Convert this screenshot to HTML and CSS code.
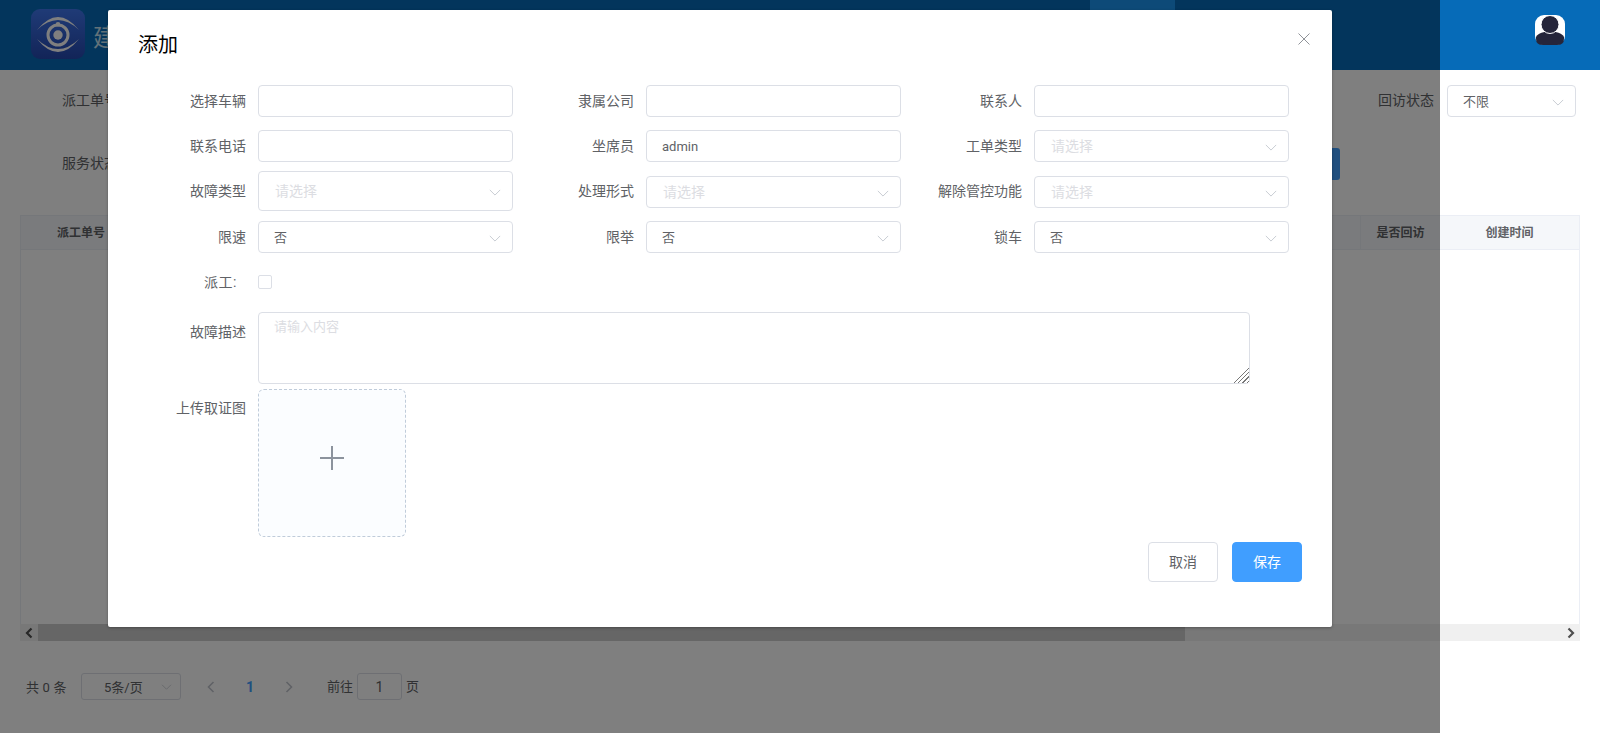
FILE: index.html
```html
<!DOCTYPE html>
<html lang="zh">
<head>
<meta charset="utf-8">
<title>添加</title>
<link rel="stylesheet" href="styles.css">
</head>
<body>
<div class="page">
  <header class="topbar">
    <svg class="logo" viewBox="0 0 54 50">
      <defs><linearGradient id="lg" x1="0" y1="0" x2="0" y2="1"><stop offset="0" stop-color="#3f76ee"/><stop offset="1" stop-color="#2549b0"/></linearGradient></defs>
      <rect width="54" height="50" rx="9" fill="url(#lg)"/>
      <path class="eye-fill" d="M6 21Q27 -5 48 21Q27 1 6 21Z"/>
      <path class="eye-fill" d="M6 30Q27 56 48 30Q27 50 6 30Z"/>
      <circle class="eye-line" cx="27" cy="26" r="10"/>
      <circle class="eye-fill" cx="27" cy="26" r="4.700"/>
      <circle class="eye-fill" cx="27" cy="15.300" r="2.300"/>
    </svg>
    <div class="brand">建</div>
    <div class="nav-tab"></div>
    <div class="user">
      <svg class="avatar" viewBox="0 0 30 30">
        <rect width="30" height="30" rx="9" fill="#fff"/>
        <path d="M1 22C3 18 9 16.500 15 16.500S27 18 29 22V24Q29 30 22 30H8Q1 30 1 24Z" fill="#25253a"/>
        <circle cx="15" cy="9.500" r="9" fill="#25253a" stroke="#fff" stroke-width="1"/>
      </svg>
    </div>
  </header>

  <section class="filters">
    <div class="filter-row">
      <span class="filter-label">派工单号</span>
      <div class="filter-end">
        <span class="filter-label">回访状态</span>
        <div class="field filter-select"><span>不限</span>
          <svg class="chev" viewBox="0 0 14 8"><path d="M1 1l6 6 6-6"/></svg></div>
      </div>
    </div>
    <div class="filter-row second">
      <span class="filter-label raised">服务状态</span>
      <div class="search-btn"></div>
    </div>
  </section>

  <section class="table">
    <div class="thead">
      <div class="th first">派工单号</div>
      <div class="th grow"></div>
      <div class="th mid-col">是否回访</div>
      <div class="th last">创建时间</div>
    </div>
    <div class="tbody"></div>
    <div class="hscroll">
      <div class="sb-btn"><svg viewBox="0 0 8 12"><path d="M6.500 1.500L2 6l4.500 4.500"/></svg></div>
      <div class="sb-track"><div class="sb-thumb"></div></div>
      <div class="sb-btn"><svg viewBox="0 0 8 12"><path d="M1.500 1.500L6 6l-4.500 4.500"/></svg></div>
    </div>
  </section>

  <footer class="pager">
    <span class="total">共 0 条</span>
    <div class="size-select"><span>5条/页</span><svg class="chev" viewBox="0 0 14 8"><path d="M1 1l6 6 6-6"/></svg></div>
    <svg class="pg-arrow first-arrow" viewBox="0 0 8 12"><path d="M6.500 1L1.500 6l5 5"/></svg>
    <span class="pg-num">1</span>
    <svg class="pg-arrow" viewBox="0 0 8 12"><path d="M1.500 1l5 5-5 5"/></svg>
    <span class="goto">前往</span>
    <div class="goto-input">1</div>
    <span class="goto-tail">页</span>
  </footer>
</div>

<div class="overlay">
  <div class="dialog">
    <svg class="close" viewBox="0 0 12 12"><path d="M.5.500l11 11M11.500.500l-11 11"/></svg>
    <h2 class="dialog-title">添加</h2>
    <form class="form-grid">
      <div class="item"><label class="lbl">选择车辆</label><input class="field" type="text"></div>
      <div class="item"><label class="lbl">隶属公司</label><input class="field" type="text"></div>
      <div class="item"><label class="lbl">联系人</label><input class="field" type="text"></div>

      <div class="item"><label class="lbl">联系电话</label><input class="field" type="text"></div>
      <div class="item"><label class="lbl">坐席员</label><input class="field" type="text" value="admin"></div>
      <div class="item"><label class="lbl">工单类型</label><div class="field"><span class="ph">请选择</span><svg class="chev" viewBox="0 0 14 8"><path d="M1 1l6 6 6-6"/></svg></div></div>

      <div class="item"><label class="lbl">故障类型</label><div class="field tall"><span class="ph">请选择</span><svg class="chev" viewBox="0 0 14 8"><path d="M1 1l6 6 6-6"/></svg></div></div>
      <div class="item centered"><label class="lbl">处理形式</label><div class="field"><span class="ph">请选择</span><svg class="chev" viewBox="0 0 14 8"><path d="M1 1l6 6 6-6"/></svg></div></div>
      <div class="item centered"><label class="lbl">解除管控功能</label><div class="field"><span class="ph">请选择</span><svg class="chev" viewBox="0 0 14 8"><path d="M1 1l6 6 6-6"/></svg></div></div>

      <div class="item"><label class="lbl">限速</label><div class="field"><span>否</span><svg class="chev" viewBox="0 0 14 8"><path d="M1 1l6 6 6-6"/></svg></div></div>
      <div class="item"><label class="lbl">限举</label><div class="field"><span>否</span><svg class="chev" viewBox="0 0 14 8"><path d="M1 1l6 6 6-6"/></svg></div></div>
      <div class="item"><label class="lbl">锁车</label><div class="field"><span>否</span><svg class="chev" viewBox="0 0 14 8"><path d="M1 1l6 6 6-6"/></svg></div></div>
    </form>

    <div class="dispatch-row"><label class="lbl dispatch-lbl">派工:</label><span class="check"></span></div>
    <div class="text-row"><label class="lbl top">故障描述</label><textarea class="area" placeholder="请输入内容"></textarea></div>
    <div class="upload-row">
      <label class="lbl top upload-lbl">上传取证图</label>
      <div class="upload"><svg viewBox="0 0 24 24"><path d="M12 0V24M0 12H24"/></svg></div>
    </div>
    <div class="dialog-foot">
      <button class="btn" type="button">取消</button>
      <button class="btn primary" type="button">保存</button>
    </div>
  </div>
</div>
</body>
</html>
```

FILE: styles.css
```css
* { box-sizing: border-box; }
html, body { margin: 0; padding: 0; height: 100%; overflow: hidden; background: #fff; }
body { font-family: Roboto, "Noto Sans CJK SC", sans-serif; font-size: 13px; color: #606266; }

.page { width: 1600px; height: 742px; display: flex; flex-direction: column; }

/* top bar */
.topbar { height: 70px; flex: none; display: flex; align-items: center; background: #066bb8; padding-left: 31px; }
.logo { width: 54px; height: 50px; flex: none; margin-top: -2px; }
.eye-fill { fill: #fff; }
.eye-line { fill: none; stroke: #fff; stroke-width: 3; }
.brand { margin-left: 8px; font-size: 24px; color: #c4e2f2; white-space: nowrap; width: 980px; overflow: hidden; }
.nav-tab { width: 85px; height: 70px; margin-left: 17px; background: #1a94f0; }
.user { margin-left: auto; width: 65px; display: flex; align-items: center; height: 70px; }
.avatar { width: 30px; height: 30px; margin-top: -10px; }

/* filters */
.filters { flex: none; }
.filter-row { display: flex; align-items: center; justify-content: space-between; height: 32px; margin-top: 15px; padding: 0 24px 0 62px; }
.filter-row.second { margin-top: 31px; padding-right: 260px; }
.filter-label { font-size: 14px; color: #606266; margin-bottom: 4px; }
.filter-label.raised { margin-bottom: 4px; }
.filter-end { display: flex; align-items: center; gap: 13px; }
.search-btn { width: 70px; height: 32px; background: #409eff; border-radius: 3px; }

/* table */
.table { margin: 35px 20px 0; height: 426px; flex: none; display: flex; flex-direction: column; }
.thead { height: 35px; flex: none; display: flex; background: #f5f7fa; border: 1px solid #ebeef5; }
.th { height: 33px; line-height: 35px; text-align: center; font-size: 12px; font-weight: 700; color: #606266; }
.th.first { width: 120px; }
.th.grow { flex: 1; }
.th.mid-col { width: 80px; border-left: 1px solid #ebeef5; }
.th.last { width: 139px; }
.tbody { flex: 1; border: solid #ebeef5; border-width: 0 1px; }
.hscroll { height: 17px; flex: none; display: flex; background: #f0f0f0; }
.sb-btn { width: 18px; flex: none; display: flex; align-items: center; justify-content: center; }
.sb-btn svg { width: 8px; height: 12px; fill: none; stroke: #505050; stroke-width: 2.200; }
.sb-track { flex: 1; }
.sb-thumb { width: 1147px; height: 17px; background: #cdcdcd; }

/* pagination */
.pager { flex: none; display: flex; align-items: center; height: 27px; margin-top: 32px; padding-left: 26px; }
.total { width: 55px; letter-spacing: .2px; }
.size-select { position: relative; width: 100px; height: 27px; border: 1px solid #dcdfe6; border-radius: 3px; display: flex; align-items: center; padding-left: 22px; }
.size-select .chev { width: 11px; height: 6px; right: 8px; margin-top: -3px; }
.pg-arrow { width: 8px; height: 12px; fill: none; stroke: #c0c4cc; stroke-width: 1.600; flex: none; }
.first-arrow { margin-left: 26px; }
.pg-num { width: 70px; text-align: center; font-size: 14px; font-weight: 700; color: #409eff; }
.goto { margin-left: 34px; margin-bottom: 2px; }
.goto-input { width: 45px; height: 27px; margin-left: 4px; border: 1px solid #dcdfe6; border-radius: 3px; text-align: center; font-size: 14px; line-height: 27px; }
.goto-tail { margin-left: 4px; margin-bottom: 2px; }

/* overlay + dialog */
.overlay { position: absolute; left: 0; top: 0; width: 1440px; height: 733px; background: rgba(0, 0, 0, .5); }
.dialog { position: relative; width: 1224px; height: 617px; margin: 10px 0 0 108px; background: #fff; border-radius: 2px; box-shadow: 0 1px 3px rgba(0, 0, 0, .3); }
.close { position: absolute; right: 22px; top: 23px; width: 12px; height: 12px; fill: none; stroke: #909399; stroke-width: 1; }
.dialog-title { margin: 0; padding: 23px 0 0 30px; height: 75px; font-size: 20px; line-height: 24px; font-weight: 400; color: #000; }

.form-grid { display: grid; grid-template-columns: repeat(3, 388px); grid-template-rows: 35px 31px 40px 32px; row-gap: 10px; align-items: start; padding-left: 17px; }
.item { display: flex; align-items: center; }
.item.centered { align-self: center; margin-top: 1px; }
.lbl { width: 138px; flex: none; text-align: right; font-size: 14px; color: #606266; white-space: nowrap; }
.form-grid .lbl { width: 121px; margin-bottom: 3px; }
.field { position: relative; flex: none; display: flex; align-items: center; width: 255px; height: 32px; margin-left: 12px; padding: 0 15px; background: #fff; border: 1px solid #dcdfe6; border-radius: 4px; font: inherit; font-size: 13px; color: #606266; outline: none; }
.field span { margin-bottom: 2px; }
.field.tall { height: 40px; }
.field.filter-select { width: 129px; margin-left: 0; }
.field span.ph { color: #dcdde2; font-size: 14px; margin-left: 1px; }
.chev { position: absolute; right: 11px; top: 50%; margin-top: -2px; width: 12px; height: 7px; fill: none; stroke: #c0c4cc; stroke-width: 1; }

.dispatch-row { display: flex; align-items: center; height: 14px; margin-top: 22px; }
.dispatch-lbl { width: 129px; margin-right: 1px; margin-bottom: 2px; letter-spacing: .5px; }
.check { width: 14px; height: 14px; margin-left: 20px; background: #fff; border: 1px solid #dcdfe6; border-radius: 2px; }

.text-row { display: flex; align-items: flex-start; margin-top: 23px; }
.top { line-height: 40px; }
.upload-lbl { margin-top: -1px; }
.area { display: block; width: 992px; height: 72px; margin-left: 12px; padding: 4px 15px; border: 1px solid #dcdfe6; border-radius: 4px; font: inherit; font-size: 13px; line-height: 20px; color: #606266; outline: none; }
.area::placeholder { color: #dcdde2; }
.area::-webkit-resizer { background: linear-gradient(135deg, #fff 48%, transparent 48%), repeating-linear-gradient(135deg, #777 0 1.200px, #fff 1.200px 3.200px); }

.upload-row { display: flex; align-items: flex-start; margin-top: 5px; }
.upload { width: 148px; height: 148px; margin-left: 12px; padding-bottom: 10px; display: flex; align-items: center; justify-content: center; background: #fbfdff; border: 1px dashed #c0ccda; border-radius: 6px; }
.upload svg { width: 24px; height: 24px; fill: none; stroke: #8c939d; stroke-width: 2; }

.dialog-foot { display: flex; justify-content: flex-end; gap: 14px; margin-top: 5px; padding-right: 30px; }
.btn { width: 70px; height: 40px; padding: 0 0 3px; background: #fff; border: 1px solid #dcdfe6; border-radius: 4px; font: inherit; font-size: 14px; color: #606266; }
.btn.primary { background: #409eff; border-color: #409eff; color: #fff; }
```
